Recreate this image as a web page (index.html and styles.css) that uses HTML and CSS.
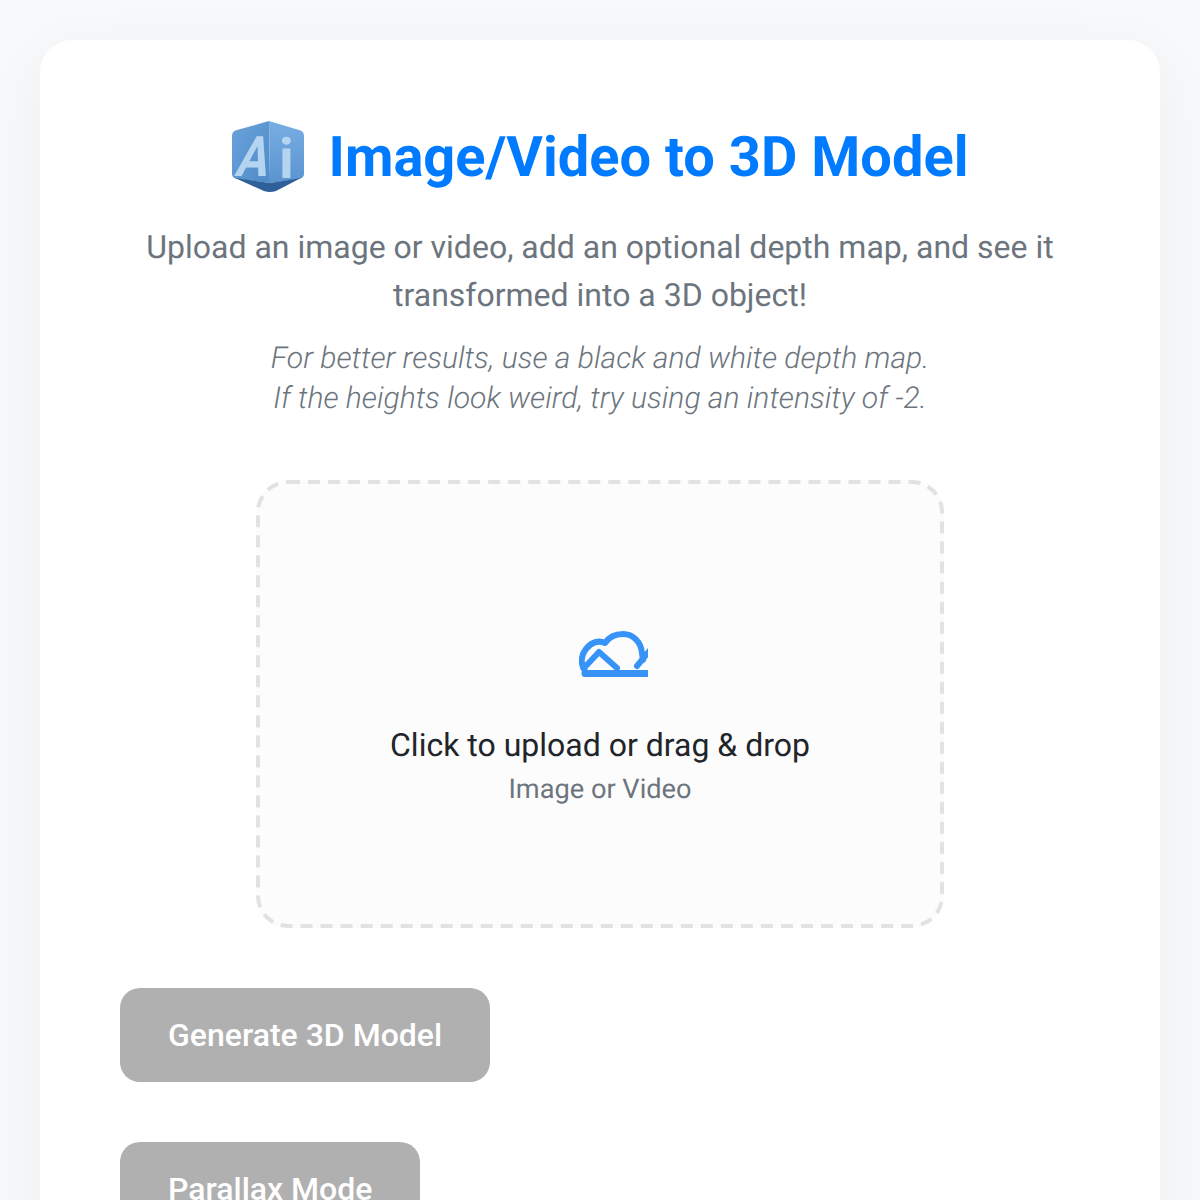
FILE: index.html
```html
<!DOCTYPE html>
<html lang="en">
<head>
  <meta charset="UTF-8" />
  <meta name="viewport" content="width=device-width, initial-scale=1.0" />
  <title>Image/Video to 3D Model</title>
  <link rel="stylesheet" href="styles.css">
</head>
<body>
  <main class="card">
    <h1 class="title">
      <svg class="logo" viewBox="0 0 72 72" aria-hidden="true">
        <defs>
          <linearGradient id="leftFace" x1="0" y1="0" x2="1" y2="1">
            <stop offset="0" stop-color="#6aa2da" />
            <stop offset="1" stop-color="#4f8bc9" />
          </linearGradient>
          <linearGradient id="rightFace" x1="0" y1="0" x2="0" y2="1">
            <stop offset="0" stop-color="#78aee2" />
            <stop offset="1" stop-color="#5a94d0" />
          </linearGradient>
        </defs>
        <path d="M0 15 Q0 10 5 9 L37 0 L38 62 L5 58 Q0 57 0 53 Z" fill="url(#leftFace)" />
        <path d="M37 0 L67 9 Q72 10 72 15 L72 53 Q72 57 67 58 L38 62 Z" fill="url(#rightFace)" />
        <path d="M3 57 L38 62 L69 57 L44 70 Q38 72 32 70 Z" fill="#2f6099" />
        <text class="logo-a" transform="translate(2 55) skewX(-14) scale(.85 1)">A</text>
        <text class="logo-i" x="47" y="57">i</text>
      </svg>
      <span>Image/Video to 3D Model</span>
    </h1>
    <p class="subtitle">Upload an image or video, add an optional depth map, and see it transformed into a 3D object!</p>
    <p class="note">For better results, use a black and white depth map.<br>If the heights look weird, try using an intensity of -2.</p>

    <div class="dropzone">
      <svg class="cloud" viewBox="0 0 69 46" aria-hidden="true">
        <path d="M6 40 C1 33 2 24 7 18 C12 11 20 9 26 12 C30 6 37 3 44 3 C54 3 62 11 63 22 L64 29" />
        <path class="cloud-base" d="M6 42.5 L72 42.5" />
        <path d="M5 37 L20 21 L38 37" />
        <path d="M58 35 L72 18" />
      </svg>
      <div class="drop-main">Click to upload or drag &amp; drop</div>
      <div class="drop-sub">Image or Video</div>
    </div>

    <div class="actions">
      <button class="btn" disabled>Generate 3D Model</button>
      <button class="btn" disabled>Parallax Mode</button>
    </div>
  </main>
</body>
</html>
```

FILE: styles.css
```css
html, body {
  height: 1200px;
  overflow: hidden;
}
body {
  margin: 0;
  padding: 40px;
  box-sizing: border-box;
  font-family: Roboto, "Liberation Sans", sans-serif;
  text-rendering: geometricPrecision;
  background: #f8f9fa;
  color: #212529;
}
.card {
  background: #fff;
  border-radius: 32px;
  padding: 80px;
  min-height: 1300px;
  box-shadow: 0 16px 64px rgba(0, 0, 0, 0.05);
  text-align: center;
}
.title {
  display: flex;
  align-items: center;
  justify-content: center;
  gap: 25px;
  margin: 0 0 29px;
  font-size: 56px;
  line-height: 74px;
  font-weight: 700;
  color: #007bff;
}
.logo {
  width: 72px;
  height: 72px;
}
.logo-a,
.logo-i {
  font-family: Roboto, sans-serif;
  font-size: 56px;
  font-weight: 700;
  fill: #b4d4f0;
}
.subtitle {
  margin: 0 0 20px;
  font-size: 32px;
  line-height: 48px;
  color: #6c757d;
}
.note {
  margin: 0 0 61px;
  font-size: 30.1px;
  line-height: 40px;
  font-style: italic;
  font-weight: 300;
  color: #6c757d;
}
.dropzone {
  position: relative;
  width: 688px;
  height: 448px;
  box-sizing: border-box;
  margin: 0 auto 60px;
  padding-top: 34px;
  border-radius: 32px;
  background: #fcfcfc;
  display: flex;
  flex-direction: column;
  align-items: center;
  justify-content: center;
}
/* 2px dash scaled up, a plain 4px border gives shorter dashes */
.dropzone::before {
  content: "";
  position: absolute;
  top: 0;
  left: 0;
  width: 50%;
  height: 50%;
  box-sizing: border-box;
  border: 2px dashed #e2e2e2;
  border-radius: 16px;
  transform: scale(2);
  transform-origin: 0 0;
}
.cloud {
  width: 69px;
  height: 46px;
  margin-left: 27px;
  margin-bottom: 46px;
  fill: none;
  stroke: #3793f8;
  stroke-width: 6;
  stroke-linecap: round;
  stroke-linejoin: round;
}
.cloud-base {
  stroke-width: 7;
}
.drop-main {
  font-size: 32px;
  line-height: 44px;
  color: #212529;
}
.drop-sub {
  font-size: 27.2px;
  line-height: 44px;
  color: #6c757d;
}
.actions {
  display: flex;
  flex-direction: column;
  align-items: flex-start;
  gap: 60px;
}
.btn {
  font-family: inherit;
  font-size: 32px;
  font-weight: 500;
  line-height: 38px;
  padding: 28px 48px;
  border: none;
  border-radius: 20px;
  background: #b0b0b0;
  color: #fff;
}
```
